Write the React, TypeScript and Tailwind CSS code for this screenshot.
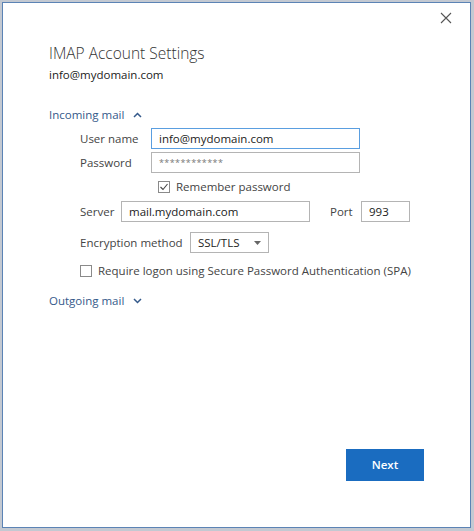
import { useState } from "react";

const font = { fontFamily: '"Open Sans", "Noto Sans", sans-serif' };

const Chevron = ({ up }: { up?: boolean }) => (
  <svg width="9" height="6" viewBox="0 0 9 6" className="ml-[9px]">
    <polyline
      points={up ? "1,5 4.5,1.5 8,5" : "1,1 4.5,4.5 8,1"}
      fill="none"
      stroke="#34598a"
      strokeWidth="1.5"
    />
  </svg>
);

const Checkbox = ({ checked }: { checked?: boolean }) => (
  <span className="flex h-[12px] w-[12px] shrink-0 items-center justify-center border border-[#8a8a8a] bg-white">
    {checked && (
      <svg width="10" height="10" viewBox="0 0 10 10">
        <polyline points="1.5,5 4,7.5 8.5,2" fill="none" stroke="#444" strokeWidth="1.1" />
      </svg>
    )}
  </span>
);

const Field = ({
  value,
  width,
  focused,
  muted,
}: {
  value: string;
  width: string;
  focused?: boolean;
  muted?: boolean;
}) => (
  <div
    className={`flex h-[21px] shrink-0 items-center border bg-white pl-[7px] ${width} ${
      focused ? "border-[#5a9ee0]" : "border-[#b4b4b4]"
    } ${muted ? "text-[9px] tracking-[0.4px] text-[#777]" : "text-[11.5px] text-[#222]"}`}
  >
    {value}
  </div>
);

export default function App() {
  const [outgoingOpen] = useState(false);

  return (
    <div className="h-[531px] w-[474px] bg-[#c3c9d2] pl-[2px] pt-[2px]" style={font}>
      <div className="relative flex h-[526px] w-[469px] flex-col border border-[#5b83b5] bg-white pl-[46px] text-[#444]">
        <div className="flex h-[30px] justify-end pr-[18px] pt-[9px]">
          <svg width="12" height="12" viewBox="0 0 12 12">
            <path d="M1 1 L11 11 M11 1 L1 11" stroke="#555" strokeWidth="1.1" />
          </svg>
        </div>

        <div className="mt-[9px] flex h-[24px] items-center text-[15.5px] font-light text-[#333]">
          IMAP Account Settings
        </div>
        <div className="flex h-[18px] items-center text-[11.5px] text-[#222]">info@mydomain.com</div>

        <button className="mt-[22px] flex h-[18px] items-center text-[11.5px] text-[#34598a]">
          Incoming mail
          <Chevron up />
        </button>

        <div className="ml-[31px] mt-[4px] flex flex-col gap-[3px] whitespace-nowrap text-[11.5px]">
          <div className="flex h-[21px] items-center">
            <span className="w-[71px]">User name</span>
            <Field value="info@mydomain.com" width="w-[209px]" focused />
          </div>
          <div className="flex h-[21px] items-center">
            <span className="w-[71px]">Password</span>
            <Field value="************" width="w-[209px]" muted />
          </div>
          <div className="mt-[3px] flex h-[15px] items-center pl-[78px]">
            <Checkbox checked />
            <span className="ml-[6px]">Remember password</span>
          </div>

          <div className="mt-[4px] flex h-[21px] items-center">
            <span className="w-[41px]">Server</span>
            <Field value="mail.mydomain.com" width="w-[189px]" />
            <span className="ml-[20px] w-[31px]">Port</span>
            <Field value="993" width="w-[49px]" />
          </div>

          <div className="mt-[7px] flex h-[21px] items-center">
            <span className="w-[110px]">Encryption method</span>
            <div className="flex h-[21px] w-[79px] items-center justify-between border border-[#b4b4b4] bg-white pl-[7px] pr-[7px] text-[11.5px] text-[#222]">
              SSL/TLS
              <svg width="7" height="4" viewBox="0 0 7 4">
                <polygon points="0,0 7,0 3.5,4" fill="#666" />
              </svg>
            </div>
          </div>

          <div className="mt-[7px] flex h-[15px] items-center">
            <Checkbox />
            <span className="ml-[6px]">Require logon using Secure Password Authentication (SPA)</span>
          </div>
        </div>

        <button className="mt-[14px] flex h-[18px] items-center text-[11.5px] text-[#34598a]">
          Outgoing mail
          <Chevron up={outgoingOpen} />
        </button>

        <div className="mt-[139px] flex justify-end pr-[46px]">
          <button className="h-[32px] w-[78px] bg-[#1a6cc0] text-[11.5px] font-semibold text-white">
            Next
          </button>
        </div>
      </div>
    </div>
  );
}
